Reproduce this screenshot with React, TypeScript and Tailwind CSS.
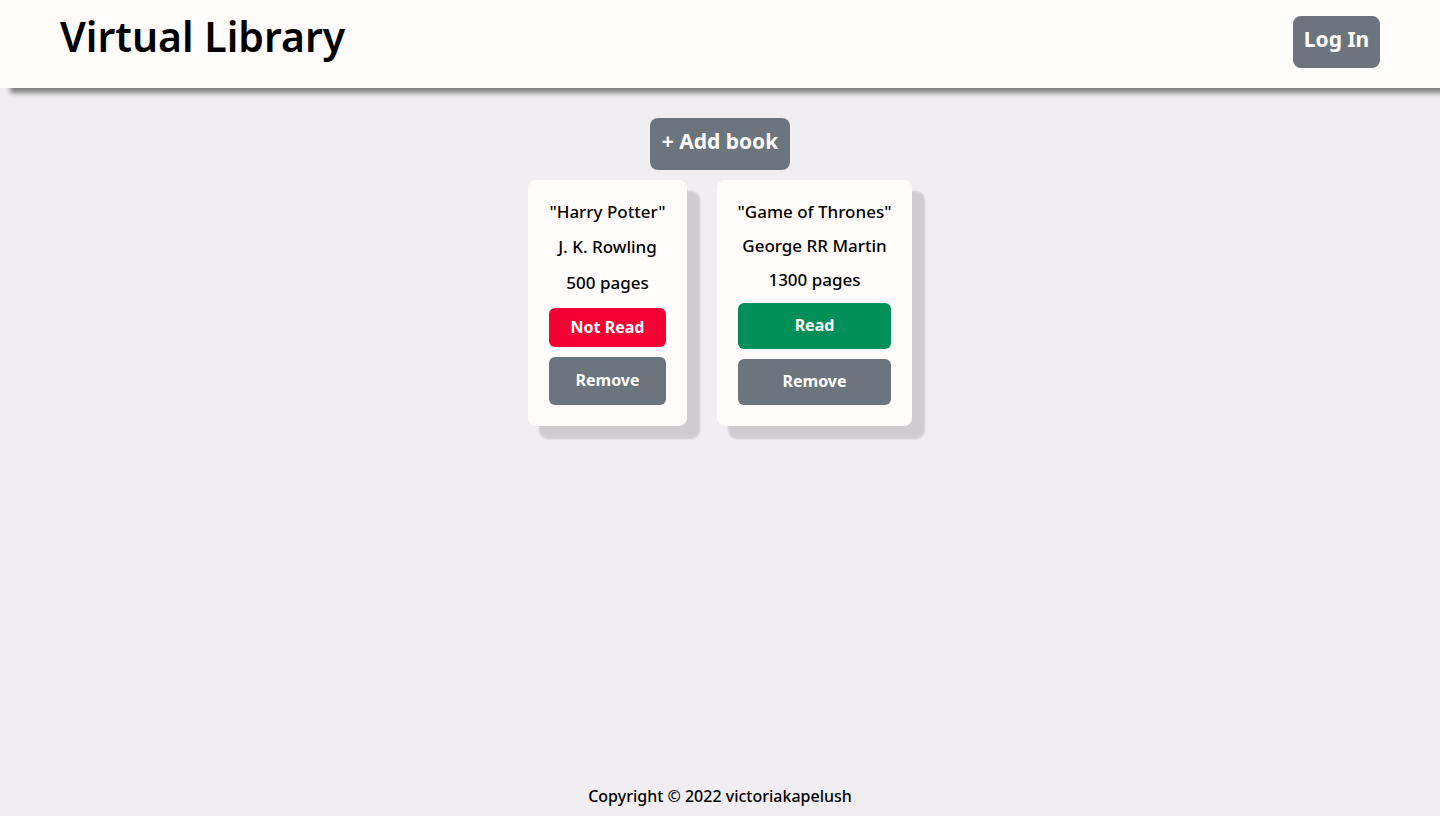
type Book = {
  title: string;
  author: string;
  pages: number;
  read: boolean;
};

const books: Book[] = [
  { title: "Harry Potter", author: "J. K. Rowling", pages: 500, read: false },
  { title: "Game of Thrones", author: "George RR Martin", pages: 1300, read: true },
];

function BookCard({ book }: { book: Book }) {
  const layout = book.read
    ? "min-w-[195px] grid-rows-[24px_24px_24px_46px_46px]"
    : "min-w-[159px] grid-rows-[25px_26px_26px_39px_48px]";
  return (
    <article
      className={`grid gap-[10px] rounded-lg bg-[#fffcfb] p-[21px] text-center text-[17px] leading-[22px] font-medium whitespace-nowrap shadow-[12px_12px_2px_1px_rgba(0,0,0,0.14)] ${layout}`}
    >
      <p className="-mx-1">"{book.title}"</p>
      <p className="-mx-1">{book.author}</p>
      <p className="-mx-1">{book.pages} pages</p>
      <button
        type="button"
        className={`rounded-md pb-[2px] text-base font-bold text-white ${book.read ? "bg-[#008f58]" : "bg-[#f50033]"}`}
      >
        {book.read ? "Read" : "Not Read"}
      </button>
      <button type="button" className="rounded-md bg-[#6c757d] pb-[2px] text-base font-bold text-white">
        Remove
      </button>
    </article>
  );
}

export default function App() {
  return (
    <div className="flex min-h-screen flex-col bg-[#f0eef1] font-['Noto_Sans',sans-serif] text-black">
      <header className="flex items-start justify-between bg-[#fffcfb] px-[60px] pt-4 pb-5 shadow-[10px_5px_5px_gray]">
        <h1 className="text-[41px] leading-10 font-semibold">Virtual Library</h1>
        <button
          type="button"
          className="h-[52px] min-w-[87px] rounded-lg bg-[#6c757d] px-[10px] pb-1 text-[21px] font-bold text-white"
        >
          Log In
        </button>
      </header>
      <main className="flex grow flex-col items-center gap-[10px] pt-[30px]">
        <button
          type="button"
          className="h-[52px] min-w-[140px] rounded-lg bg-[#6c757d] px-[10px] pb-1 text-[21px] font-bold text-white"
        >
          + Add book
        </button>
        <section aria-label="Books" className="flex flex-wrap justify-center gap-[30px]">
          {books.map((book) => (
            <BookCard key={book.title} book={book} />
          ))}
        </section>
      </main>
      <footer className="pb-2 text-center text-base leading-6 font-medium">
        Copyright © 2022 victoriakapelush
      </footer>
    </div>
  );
}
